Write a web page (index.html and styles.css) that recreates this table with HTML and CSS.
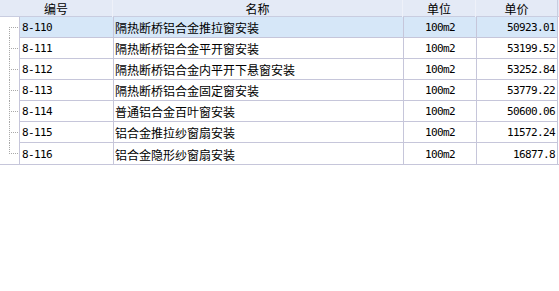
FILE: index.html
```html
<!DOCTYPE html>
<html lang="zh">
<head>
<meta charset="utf-8">
<link rel="stylesheet" href="styles.css">
</head>
<body>
<div class="grid">
  <div class="head">
    <div class="hc h-code">编号</div>
    <div class="hc h-name">名称</div>
    <div class="hc h-unit">单位</div>
    <div class="hc h-price">单价</div>
  </div>
  <div class="row sel first">
    <div class="gut"></div>
    <div class="c code">8-110</div>
    <div class="c name">隔热断桥铝合金推拉窗安装</div>
    <div class="c unit">100m2</div>
    <div class="c price">50923.01</div>
  </div>
  <div class="row">
    <div class="gut"></div>
    <div class="c code">8-111</div>
    <div class="c name">隔热断桥铝合金平开窗安装</div>
    <div class="c unit">100m2</div>
    <div class="c price">53199.52</div>
  </div>
  <div class="row">
    <div class="gut"></div>
    <div class="c code">8-112</div>
    <div class="c name">隔热断桥铝合金内平开下悬窗安装</div>
    <div class="c unit">100m2</div>
    <div class="c price">53252.84</div>
  </div>
  <div class="row">
    <div class="gut"></div>
    <div class="c code">8-113</div>
    <div class="c name">隔热断桥铝合金固定窗安装</div>
    <div class="c unit">100m2</div>
    <div class="c price">53779.22</div>
  </div>
  <div class="row">
    <div class="gut"></div>
    <div class="c code">8-114</div>
    <div class="c name">普通铝合金百叶窗安装</div>
    <div class="c unit">100m2</div>
    <div class="c price">50600.06</div>
  </div>
  <div class="row">
    <div class="gut"></div>
    <div class="c code">8-115</div>
    <div class="c name">铝合金推拉纱窗扇安装</div>
    <div class="c unit">100m2</div>
    <div class="c price">11572.24</div>
  </div>
  <div class="row last">
    <div class="gut"></div>
    <div class="c code">8-116</div>
    <div class="c name">铝合金隐形纱窗扇安装</div>
    <div class="c unit">100m2</div>
    <div class="c price">16877.8</div>
  </div>
</div>
</body>
</html>
```

FILE: styles.css
```css
html, body {
  margin: 0;
  padding: 0;
  background: #ffffff;
}
body {
  width: 559px;
  height: 291px;
  overflow: hidden;
  font-family: "Noto Sans CJK SC", sans-serif;
  font-size: 12px;
  color: #000000;
}
.grid {
  width: 559px;
  display: flex;
  flex-direction: column;
}
.head {
  display: grid;
  grid-template-columns: 113px 290px 73px 82px 1px;
  height: 16px;
  background: #e4eaf6;
  border-bottom: 1px solid #c9cde0;
}
.hc {
  display: flex;
  align-items: center;
  justify-content: center;
  line-height: 16px;
  border-right: 1px solid #eef1f9;
  box-sizing: border-box;
  padding-top: 1px;
}
.h-price {
  border-right: 1px solid #c9cde0;
}
.row {
  display: grid;
  grid-template-columns: 19px 94px 290px 73px 82px 1px;
  height: 21px;
}
.row.last {
  border-bottom: 1px solid #c6c6da;
  height: 21px;
}
.c {
  border-left: 1px solid #c6c6da;
  border-bottom: 1px solid #c6c6da;
  box-sizing: border-box;
  display: flex;
  align-items: center;
  white-space: nowrap;
  padding-top: 1px;
}
.row.last .c {
  border-bottom: none;
}
.row.sel .c {
  background: #d6e7f8;
}
.code, .unit, .price {
  font-family: "DejaVu Sans Mono", "Noto Sans CJK SC", monospace;
  font-size: 11px;
  letter-spacing: -0.62px;
}
.code {
  padding-left: 2px;
}
.name {
  padding-left: 1px;
}
.unit {
  justify-content: center;
}
.price {
  justify-content: flex-end;
  padding-right: 2px;
  border-right: 1px solid #c6c6da;
}
.gut {
  position: relative;
}
.gut::before {
  content: "";
  position: absolute;
  left: 9px;
  top: 0;
  width: 1px;
  height: 21px;
  background: repeating-linear-gradient(to bottom, #a8a8a8 0 1px, transparent 1px 2px);
}
.row.first .gut::before {
  top: 10px;
  height: 11px;
}
.row.last .gut::before {
  height: 11px;
}
.gut::after {
  content: "";
  position: absolute;
  left: 10px;
  top: 10px;
  width: 9px;
  height: 1px;
  background: repeating-linear-gradient(to right, transparent 0 1px, #a8a8a8 1px 2px);
}
```
